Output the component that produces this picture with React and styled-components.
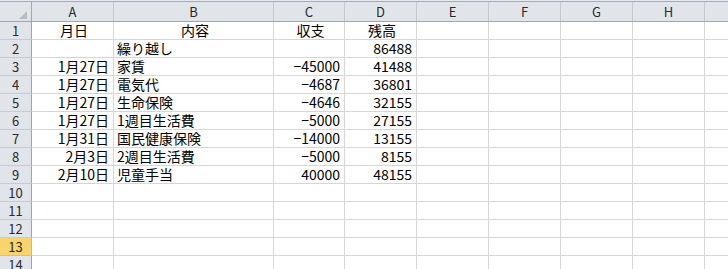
import React from 'react';
import styled, { createGlobalStyle, css } from 'styled-components';

const GlobalStyle = createGlobalStyle`
  html, body {
    margin: 0;
    padding: 0;
    background: #ffffff;
    overflow: hidden;
  }
`;

// row header + columns A..H, then I which runs past the right edge
const TEMPLATE = '32px 82px 160px 71px 72px 72px 72px 72px 72px 72px';

const Viewport = styled.div`
  width: 728px;
  height: 269px;
  overflow: hidden;
`;

const Sheet = styled.div`
  width: 798px;
  border-top: 1px solid #e6e9ed;
  font-family: "Noto Sans CJK JP", "MS PGothic", sans-serif;
  color: #000;
`;

const HeaderRow = styled.div`
  display: grid;
  grid-template-columns: ${TEMPLATE};
  height: 19px;
  border-top: 1px solid #a3abb5;
  border-bottom: 1px solid #9ea6b0;
  background: #e1e5ea;
`;

const Corner = styled.div`
  display: flex;
  justify-content: flex-end;
  align-items: flex-end;
  padding: 0 4px 2px 0;
  border-right: 1px solid #9ea6b0;
`;

const CornerMark = styled.div`
  width: 0;
  height: 0;
  border-left: 8px solid transparent;
  border-bottom: 8px solid #b8bec6;
`;

const ColHead = styled.div`
  display: flex;
  align-items: center;
  justify-content: center;
  border-right: 1px solid #c3c8cf;
  font-size: 13px;
  line-height: 1;
  color: #2a2a2a;
`;

const Row = styled.div`
  display: grid;
  grid-template-columns: ${TEMPLATE};
  height: 18px;
`;

const RowHead = styled.div`
  display: flex;
  align-items: center;
  justify-content: center;
  background: #e1e5ea;
  border-right: 1px solid #9ea6b0;
  border-bottom: 1px solid #c5cbd2;
  font-size: 13px;
  line-height: 17px;
  color: #2a2a2a;
  box-sizing: border-box;

  ${({ $active }) =>
    $active &&
    css`
      background: #f9d46c;
      border-right-color: #e8b54a;
      border-bottom-color: #eabf5a;
    `}
`;

const Cell = styled.div`
  display: flex;
  align-items: flex-end;
  justify-content: ${({ $align }) =>
    $align === 'right' ? 'flex-end' : $align === 'center' ? 'center' : 'flex-start'};
  padding: ${({ $align }) => ($align === 'right' ? '0 4px 0 0' : '0 0 0 3px')};
  border-right: 1px solid #d6d6d6;
  border-bottom: 1px solid #d6d6d6;
  box-sizing: border-box;
  font-size: 14px;
  line-height: 17px;
  white-space: nowrap;
`;

const columns = ['A', 'B', 'C', 'D', 'E', 'F', 'G', 'H', 'I'];

// 月日, 内容, 収支, 残高
const ledger = [
  [{ v: '月日', a: 'center' }, { v: '内容', a: 'center' }, { v: '収支', a: 'center' }, { v: '残高', a: 'center' }],
  [null, { v: '繰り越し' }, null, { v: '86488', a: 'right' }],
  [{ v: '1月27日', a: 'right' }, { v: '家賃' }, { v: '−45000', a: 'right' }, { v: '41488', a: 'right' }],
  [{ v: '1月27日', a: 'right' }, { v: '電気代' }, { v: '−4687', a: 'right' }, { v: '36801', a: 'right' }],
  [{ v: '1月27日', a: 'right' }, { v: '生命保険' }, { v: '−4646', a: 'right' }, { v: '32155', a: 'right' }],
  [{ v: '1月27日', a: 'right' }, { v: '1週目生活費' }, { v: '−5000', a: 'right' }, { v: '27155', a: 'right' }],
  [{ v: '1月31日', a: 'right' }, { v: '国民健康保険' }, { v: '−14000', a: 'right' }, { v: '13155', a: 'right' }],
  [{ v: '2月3日', a: 'right' }, { v: '2週目生活費' }, { v: '−5000', a: 'right' }, { v: '8155', a: 'right' }],
  [{ v: '2月10日', a: 'right' }, { v: '児童手当' }, { v: '40000', a: 'right' }, { v: '48155', a: 'right' }],
];

const ROW_COUNT = 14;
const ACTIVE_ROW = 13;

const App = () => {
  const rows = Array.from({ length: ROW_COUNT }, (_, i) => ledger[i] || []);

  return (
    <>
      <GlobalStyle />
      <Viewport>
        <Sheet>
          <HeaderRow>
            <Corner>
              <CornerMark />
            </Corner>
            {columns.map((c) => (
              <ColHead key={c}>{c}</ColHead>
            ))}
          </HeaderRow>
          {rows.map((cells, i) => (
            <Row key={i}>
              <RowHead $active={i + 1 === ACTIVE_ROW}>{i + 1}</RowHead>
              {columns.map((c, j) => {
                const cell = cells[j];
                return (
                  <Cell key={c} $align={cell ? cell.a : undefined}>
                    {cell ? cell.v : ''}
                  </Cell>
                );
              })}
            </Row>
          ))}
        </Sheet>
      </Viewport>
    </>
  );
};

export default App;
